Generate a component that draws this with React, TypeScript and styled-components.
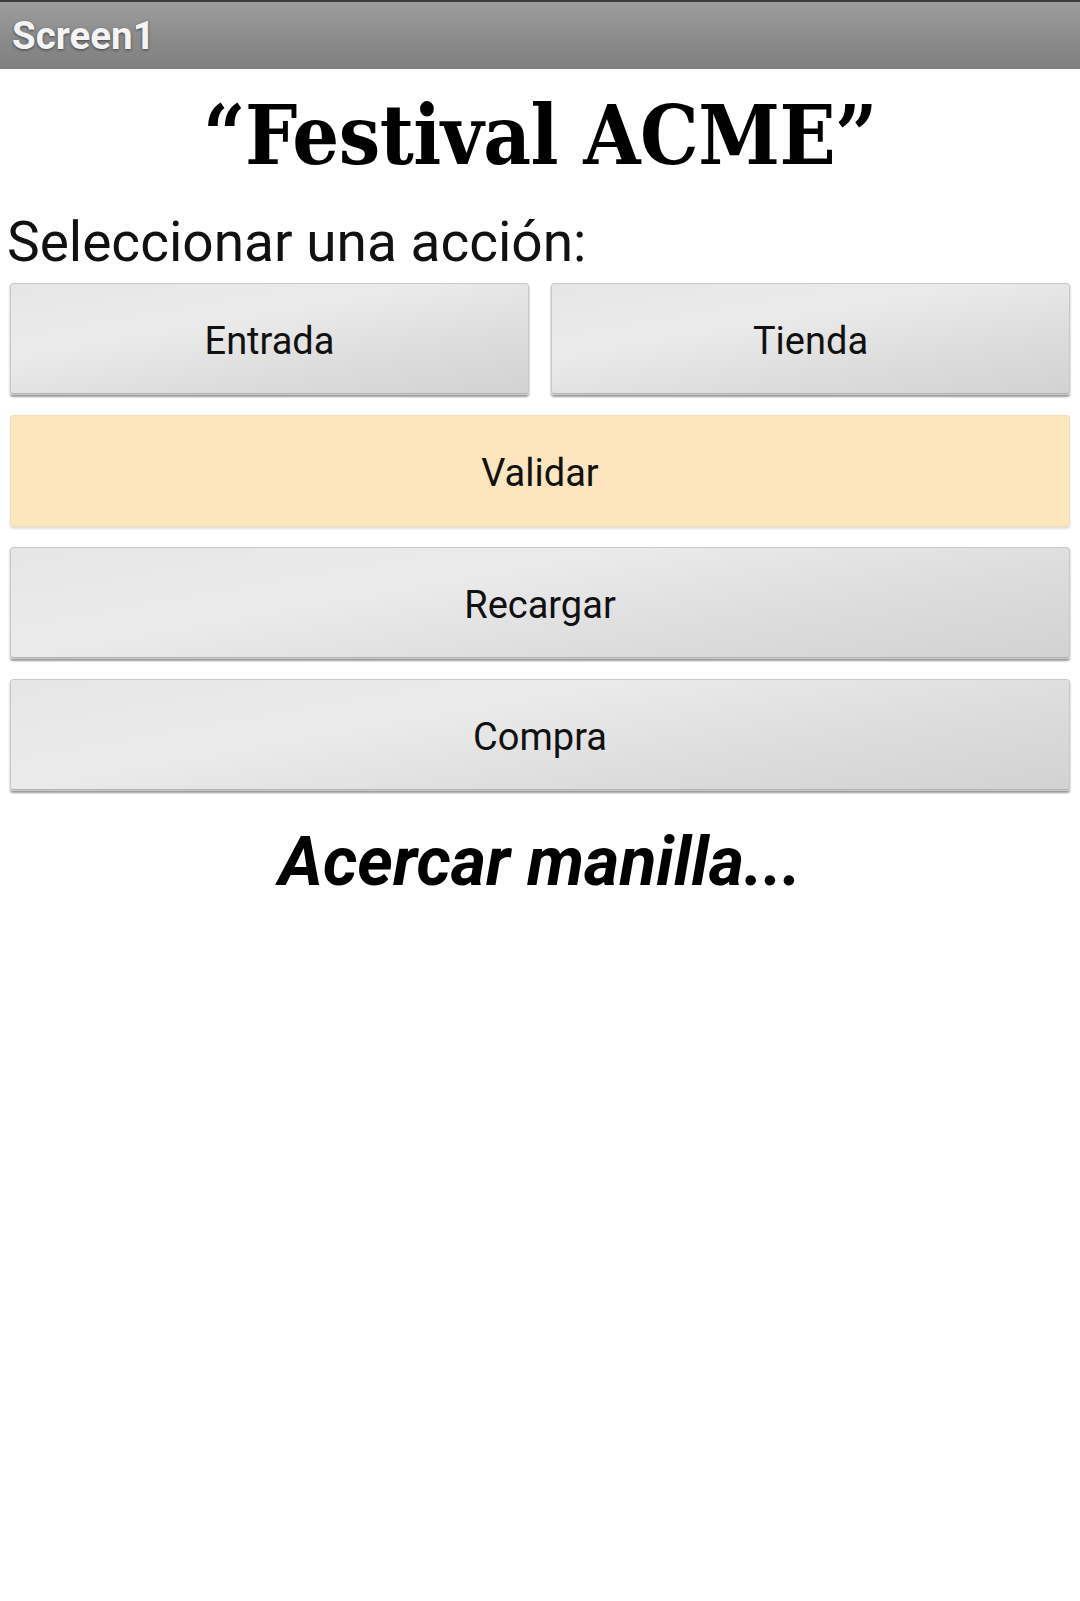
import React from "react";
import styled, { createGlobalStyle } from "styled-components";

const Global = createGlobalStyle`
  html, body { margin: 0; padding: 0; background: #ffffff; }
  body { font-family: Roboto, "Noto Sans", sans-serif; }
`;

const Screen = styled.div`
  width: 1080px;
  min-height: 1601px;
  background: #ffffff;
  display: flex;
  flex-direction: column;
`;

const TitleBar = styled.header`
  height: 67px;
  border-top: 2px solid #3a3a3a;
  background: linear-gradient(to bottom, #9d9d9d 0%, #8a8a8a 60%, #7f7f7f 100%);
  display: flex;
  align-items: center;
  padding-left: 12px;
`;

const TitleBarText = styled.span`
  font-family: Roboto, "Noto Sans", sans-serif;
  font-weight: 700;
  font-size: 38.5px;
  color: #f4f4f4;
  text-shadow: 0 1px 3px rgba(0, 0, 0, 0.55);
`;

const Content = styled.main`
  display: flex;
  flex-direction: column;
  padding: 0 10px;
`;

const Heading = styled.h1`
  margin: 18px 0 0;
  text-align: center;
  font-family: "DejaVu Serif", serif;
  font-stretch: condensed;
  font-weight: 700;
  font-size: 82px;
  line-height: 96px;
  letter-spacing: -0.5px;
  color: #000;
`;

const Prompt = styled.p`
  margin: 28px 0 0 -3px;
  font-family: Roboto, "Noto Sans", sans-serif;
  font-size: 55px;
  line-height: 62px;
  color: #111;
`;

const Buttons = styled.div`
  margin-top: 10px;
  display: flex;
  flex-direction: column;
  gap: 20px;
`;

const Pair = styled.div`
  display: grid;
  grid-template-columns: 1fr 1fr;
  gap: 22px;
`;

const ActionButton = styled.button<{ $accent?: boolean }>`
  height: 112px;
  width: 100%;
  border: 1px solid ${(p) => (p.$accent ? "#f3dcb4" : "#c9c9c9")};
  border-radius: 3px;
  background: ${(p) =>
    p.$accent
      ? "#fde6be"
      : "linear-gradient(170deg, #e6e6e6 0%, #ebebeb 35%, #dcdcdc 70%, #d2d2d2 100%)"};
  box-shadow: ${(p) =>
    p.$accent
      ? "0 2px 2px rgba(0,0,0,0.12)"
      : "0 2px 2px rgba(0,0,0,0.4), inset 0 -1px 0 #b4b4b4"};
  font-family: Roboto, "Noto Sans", sans-serif;
  font-size: 38px;
  color: #111;
  display: flex;
  align-items: center;
  justify-content: center;
  padding: 3px 0 0;
  cursor: pointer;
`;

const Notice = styled.p`
  margin: 32px 0 0;
  text-align: center;
  font-family: Roboto, "Noto Sans", sans-serif;
  font-weight: 700;
  font-style: italic;
  font-size: 68px;
  line-height: 78px;
  color: #000;
`;

export default function App() {
  return (
    <>
      <Global />
      <Screen>
        <TitleBar>
          <TitleBarText>Screen1</TitleBarText>
        </TitleBar>
        <Content>
          <Heading>“Festival ACME”</Heading>
          <Prompt>Seleccionar una acción:</Prompt>
          <Buttons>
            <Pair>
              <ActionButton>Entrada</ActionButton>
              <ActionButton>Tienda</ActionButton>
            </Pair>
            <ActionButton $accent>Validar</ActionButton>
            <ActionButton>Recargar</ActionButton>
            <ActionButton>Compra</ActionButton>
          </Buttons>
          <Notice>Acercar manilla...</Notice>
        </Content>
      </Screen>
    </>
  );
}
